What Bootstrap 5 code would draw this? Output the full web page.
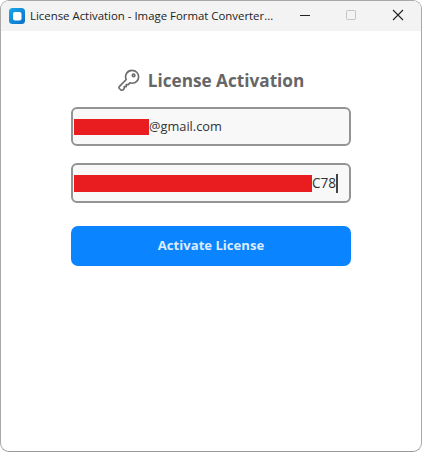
<!DOCTYPE html>
<html lang="en">
<head>
<meta charset="utf-8">
<title>License Activation</title>
<link rel="stylesheet" href="https://cdn.jsdelivr.net/npm/bootstrap@5.3.0/dist/css/bootstrap.min.css">
<style>
html,body{height:100%;margin:0;background:#fff;overflow:hidden}
body{font-family:"Open Sans","Noto Sans","Liberation Sans",sans-serif}
.win{height:452px;width:422px;border:1px solid #a9a9a9;border-bottom-color:#999;border-radius:9px;overflow:hidden;background:#fff}
.tbar{height:30px;background:#f3f3f3;padding-left:8px;font-size:11.4px;color:#222}
.tbar svg{flex:none}
.tbar-title{margin-left:5px;white-space:nowrap;width:246px;flex:none}
.wbtn{width:46px;height:30px;flex:none;margin-top:-2px}
.wbtn-spacer{width:6px;flex:none}
.wbtn-close{margin-left:1px}
.main{width:280px;margin-left:70px;padding-top:34px}
.head{height:31px;color:#666;font-weight:700;font-size:17.2px;gap:8px;margin-bottom:11px}
.head svg{margin-top:-1px;flex:none}
.field.form-control{height:39px;border:2px solid #949494;border-radius:6px;background:#f8f8f8;padding:0 0 0 1px;font-size:12.8px;color:#333;line-height:1;box-shadow:none}
.field.field-tall{height:40px;font-size:13.6px}
.field-gap{margin-bottom:17px}
.mask{background:#e91c1f;display:block;flex:none}
.m1{width:75px;height:16px}
.m2{width:238px;height:17px}
.caret-bar{width:2px;height:19px;background:#444}
.go.btn{height:40px;margin-top:23px;background:#0a84ff;border:0;border-radius:7px;color:#dcecff;font-size:13.1px;font-weight:700}
</style>
</head>
<body>
<div class="win d-flex flex-column">
  <div class="tbar d-flex align-items-center flex-shrink-0">
    <svg width="16" height="16" viewBox="0 0 16 16" aria-hidden="true"><defs><linearGradient id="ig" x1="0" y1="0" x2="1" y2="1"><stop offset="0" stop-color="#19a9ea"/><stop offset="1" stop-color="#0a6fc8"/></linearGradient></defs><rect width="16" height="16" rx="3.5" fill="url(#ig)"/><rect x="4" y="4" width="8.5" height="8.5" rx="2" fill="#fff"/></svg>
    <span class="tbar-title">License Activation - Image Format Converter...</span>
    <div class="wbtn-spacer"></div>
    <div class="wbtn d-flex align-items-center justify-content-center"><svg width="12" height="12" viewBox="0 0 12 12" aria-hidden="true"><path d="M1 6.5h10" stroke="#222" stroke-width="1"/></svg></div>
    <div class="wbtn d-flex align-items-center justify-content-center"><svg width="12" height="12" viewBox="0 0 12 12" aria-hidden="true"><rect x="1.5" y="1.5" width="9" height="9" rx="1" fill="none" stroke="#c4c4c4"/></svg></div>
    <div class="wbtn wbtn-close d-flex align-items-center justify-content-center"><svg width="12" height="12" viewBox="0 0 12 12" aria-hidden="true"><path d="M1 1l10 10M11 1L1 11" stroke="#222" stroke-width="1.1" fill="none"/></svg></div>
  </div>
  <div class="main">
    <div class="head d-flex align-items-center justify-content-center">
      <svg width="22" height="22" viewBox="0 0 24 24" fill="none" stroke="#6c6c6c" stroke-width="1.8" stroke-linejoin="round" stroke-linecap="round" aria-hidden="true"><path d="M15.500 1.500a7 7 0 0 1 7 7c0 3.900-3.200 7-7 7-.9 0-1.700-.1-2.500-.4l-1.800 1.900H9v2.300H6.800v2L5.200 23c-.5.4-1.100.5-1.700.2l-2-1.900c-.6-.6-.6-1.400-.1-2L9 11.500a7 7 0 0 1 6.500-10z"/><circle cx="17" cy="7" r="1.400"/></svg>
      <span>License Activation</span>
    </div>
    <div class="form-control field field-gap d-flex align-items-center"><span class="mask m1"></span><span>@gmail.com</span></div>
    <div class="form-control field field-tall d-flex align-items-center"><span class="mask m2"></span><span>C78</span><span class="caret-bar"></span></div>
    <button type="button" class="btn go w-100 d-block">Activate License</button>
  </div>
</div>
</body>
</html>
